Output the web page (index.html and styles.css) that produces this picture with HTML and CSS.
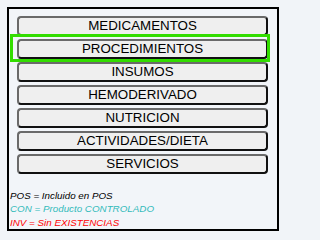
FILE: index.html
```html
<!DOCTYPE html>
<html>
<head>
<meta charset="utf-8">
<link rel="stylesheet" href="styles.css">
</head>
<body>
<div class="panel">
  <div class="menu">
    <button class="btn">MEDICAMENTOS</button>
    <div class="selected"><button class="btn">PROCEDIMIENTOS</button></div>
    <button class="btn">INSUMOS</button>
    <button class="btn">HEMODERIVADO</button>
    <button class="btn">NUTRICION</button>
    <button class="btn">ACTIVIDADES/DIETA</button>
    <button class="btn">SERVICIOS</button>
  </div>
  <div class="legend">
    <div class="pos">POS = Incluido en POS</div>
    <div class="con">CON = Producto CONTROLADO</div>
    <div class="inv">INV = Sin EXISTENCIAS</div>
  </div>
</div>
</body>
</html>
```

FILE: styles.css
```css
html, body {
  margin: 0;
  padding: 0;
  background: #f1f4f8;
}
.panel {
  box-sizing: border-box;
  margin: 7px 0 0 7px;
  width: 272px;
  height: 224px;
  border: 2px solid #000;
  background: #f2f5f9;
  padding: 7px 0 0 1px;
}
.menu {
  display: flex;
  flex-direction: column;
  gap: 3px;
  padding-left: 7px;
}
.btn {
  box-sizing: border-box;
  display: block;
  width: 251px;
  height: 20px;
  margin: 0;
  padding: 0;
  border: 2px solid;
  border-color: #6a6a6a #111 #111 #6a6a6a;
  border-radius: 4px;
  background: #efefef;
  color: #000;
  font-family: "Liberation Sans", Arial, sans-serif;
  font-size: 13.333px;
  line-height: 16px;
  text-align: center;
}
.selected {
  position: relative;
}
.selected::after {
  content: "";
  position: absolute;
  left: -7px;
  top: -5px;
  width: 260px;
  height: 28px;
  box-sizing: border-box;
  border: 3px solid #33dd00;
  pointer-events: none;
}
.legend {
  margin-top: 15px;
  font-family: "Liberation Sans", Arial, sans-serif;
  font-style: italic;
  font-size: 9.8px;
  line-height: 13.3px;
}
.pos { color: #000; }
.con { color: #33bbbb; }
.inv { color: #ff0000; }
```
